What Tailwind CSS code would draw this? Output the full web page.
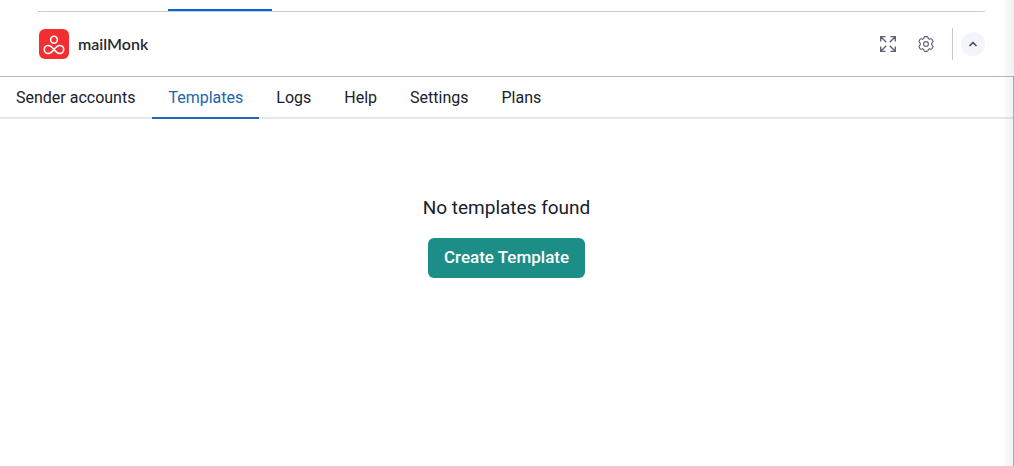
<!DOCTYPE html>
<html lang="en">
<head>
<meta charset="utf-8">
<meta name="viewport" content="width=device-width, initial-scale=1">
<title>mailMonk</title>
<script src="https://cdn.jsdelivr.net/npm/@tailwindcss/browser@4"></script>
</head>
<body class="relative flex min-h-screen flex-col bg-white font-['Roboto',sans-serif] text-base text-[#1a202c]">
  <div class="mr-[29px] ml-[38px] flex h-3 items-end border-b border-[#c8cad6]">
    <div class="ml-[130px] h-[2px] w-[104px] bg-[#0265dc]"></div>
  </div>
  <header class="flex h-16 items-center pr-[29px] pl-[39px]">
    <svg class="size-[30px]" viewBox="0 0 30 30" fill="none" aria-hidden="true">
      <rect width="30" height="30" rx="6" fill="#f22f30"/>
      <g stroke="#fff" stroke-width="1.6">
        <circle cx="15" cy="10.7" r="3.4"/>
        <path d="M15 20.5C13 18 11.500 16.500 9.300 16.500A4 4 0 0 0 9.300 24.500C11.500 24.500 13 23 15 20.500C17 18 18.500 16.500 20.700 16.500A4 4 0 0 1 20.700 24.500C18.500 24.500 17 23 15 20.500Z"/>
      </g>
    </svg>
    <h1 class="ml-[9px] font-['Lato',sans-serif] text-base leading-5 font-semibold text-[#272a31]">mailMonk</h1>
    <div class="ml-auto flex items-center">
      <button type="button" aria-label="Expand" class="text-[#5b5b72]">
        <svg class="size-4" viewBox="0 0 16 16" fill="none" stroke="currentColor" stroke-width="1.3"><path d="M5.500 .7H.7v4.800M.7.7l5.600 5.600M10.500.7h4.800v4.800M15.300.7 9.700 6.300M5.500 15.300H.7v-4.800M.7 15.300l5.600-5.600M10.500 15.300h4.800v-4.800M15.300 15.300 9.700 9.700"/></svg>
      </button>
      <button type="button" aria-label="Configure" class="ml-[22px] text-[#5b5b72]">
        <svg class="size-4" viewBox="0 0 16 16" fill="none" stroke="currentColor" stroke-width="1.100" stroke-linejoin="round"><path d="M6 1.300Q6.200.6 7 .6h2q.8 0 1 .7l.3 1.200 1.200.7 1.200-.4q.8-.2 1.200.5l1 1.700q.4.700-.2 1.200L13.700 7.300v1.400l1 1.100q.6.500.2 1.200l-1 1.700q-.4.700-1.200.5l-1.200-.4-1.200.7-.3 1.200q-.2.700-1 .7H7q-.8 0-1-.7l-.3-1.200-1.200-.7-1.200.4q-.8.200-1.200-.5L1.100 11q-.4-.700.200-1.200l1-1.100V7.300l-1-1.100Q.7 5.700 1.100 5l1-1.700q.4-.7 1.200-.5l1.200.4 1.200-.7z"/><circle cx="8" cy="8" r="2.400"/></svg>
      </button>
      <div class="ml-[18px] h-8 w-px bg-[#c8c8d4]"></div>
      <button type="button" aria-label="Collapse" class="ml-2 grid size-6 place-items-center rounded-full bg-[#f3f5fa] text-[#3c4046]">
        <svg class="size-2" viewBox="0 0 8 8" fill="none" stroke="currentColor" stroke-width="1.5"><path d="m.5 6 3.500-3.500L7.500 6"/></svg>
      </button>
    </div>
  </header>
  <main class="flex-1 border-t border-r border-[#b3b7ca]">
    <nav aria-label="Sections" class="flex h-[42px] gap-px border-b-2 border-[#e2e8f0] leading-6">
      <a href="#" class="-mb-0.5 border-b-2 border-transparent px-4 pt-[9px]">Sender accounts</a>
      <a href="#" aria-current="page" class="-mb-0.5 border-b-2 border-[#2165aa] px-4 pt-[9px] text-[#2165aa]">Templates</a>
      <a href="#" class="-mb-0.5 border-b-2 border-transparent px-4 pt-[9px]">Logs</a>
      <a href="#" class="-mb-0.5 border-b-2 border-transparent px-4 pt-[9px]">Help</a>
      <a href="#" class="-mb-0.5 border-b-2 border-transparent px-4 pt-[9px]">Settings</a>
      <a href="#" class="-mb-0.5 border-b-2 border-transparent px-4 pt-[9px]">Plans</a>
    </nav>
    <section class="flex flex-col items-center gap-[14px] pt-[73px]">
      <h2 class="text-[19px] leading-8">No templates found</h2>
      <button type="button" class="h-10 rounded-md bg-[#1d8d87] px-4 text-[17px] font-medium text-white">Create Template</button>
    </section>
  </main>
  <div class="pointer-events-none absolute inset-y-0 right-0 w-3 bg-linear-to-r from-transparent to-black/6"></div>
</body>
</html>
